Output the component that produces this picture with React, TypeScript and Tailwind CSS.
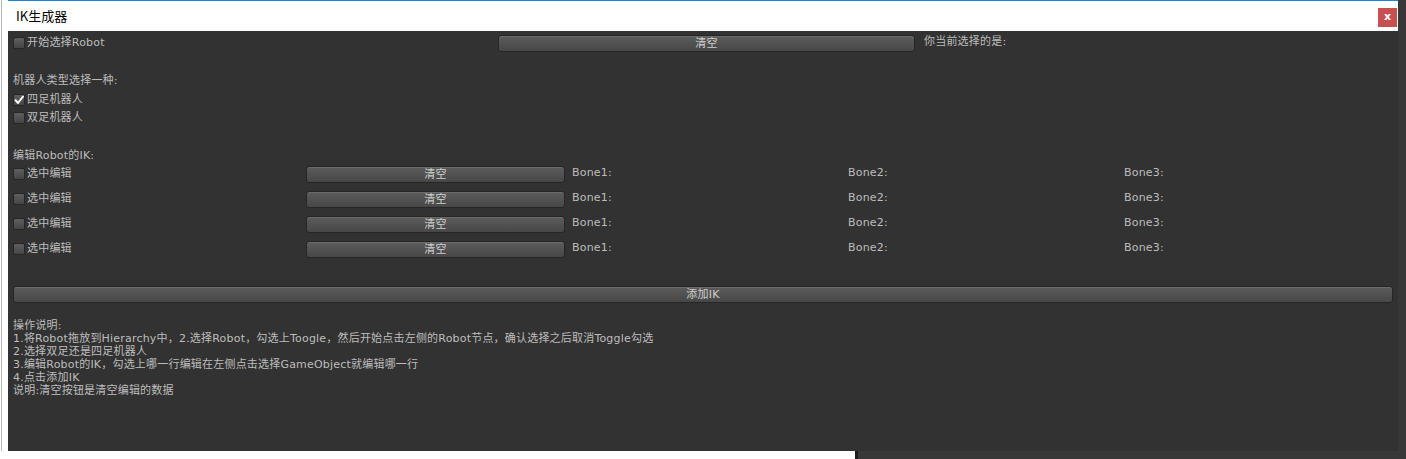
const ui = "font-['DejaVu_Sans','Noto_Sans_CJK_SC',sans-serif] text-[11px] tracking-[0.2px] text-[#bdbdbd]";

function Check({ checked = false }: { checked?: boolean }) {
  return (
    <span className="relative w-[12px] h-[12px] shrink-0 rounded-[2px] border border-[#262626] bg-gradient-to-b from-[#5e5e5e] to-[#464646]">
      {checked && (
        <svg viewBox="0 0 12 12" className="absolute -left-px -top-px w-[12px] h-[12px]">
          <path d="M2.5 6.2 L5 9 L10 2.5" fill="none" stroke="#ffffff" strokeWidth="2" strokeLinecap="round" strokeLinejoin="round" />
        </svg>
      )}
    </span>
  );
}

function Toggle({ label, checked }: { label: string; checked?: boolean }) {
  return (
    <div className="flex items-center gap-[2px]">
      <Check checked={checked} />
      <span className="leading-none pb-[1px]">{label}</span>
    </div>
  );
}

function Btn({ label, className = "" }: { label: string; className?: string }) {
  return (
    <div
      className={`h-[17px] flex items-center justify-center rounded-[3px] border border-[#262626] bg-gradient-to-b from-[#5c5c5c] to-[#474747] shadow-[inset_0_1px_0_#6a6a6a] text-[#cfcfcf] leading-none ${className}`}
    >
      {label}
    </div>
  );
}

const steps = [
  "操作说明:",
  "1.将Robot拖放到Hierarchy中，2.选择Robot，勾选上Toogle，然后开始点击左侧的Robot节点，确认选择之后取消Toggle勾选",
  "2.选择双足还是四足机器人",
  "3.编辑Robot的IK，勾选上哪一行编辑在左侧点击选择GameObject就编辑哪一行",
  "4.点击添加IK",
  "说明:清空按钮是清空编辑的数据",
];

export default function App() {
  return (
    <div className="w-[1406px] h-[459px] flex flex-col overflow-hidden bg-white">
      <div className="flex h-[451px]">
        <div className="w-[8px] bg-white flex">
          <div className="ml-[1px] w-px bg-[#b8b8b8]" />
        </div>

        <div className="w-[1390px] flex flex-col">
          <div className="h-[31px] bg-white border-t border-[#1883d7] flex justify-between">
            <span className="pl-[8px] self-center pb-[1px] text-[13px] text-black font-['Noto_Sans_CJK_SC','DejaVu_Sans',sans-serif] leading-none">
              IK生成器
            </span>
            <div className="mt-[7px] mr-[1px] w-[19px] h-[19px] bg-[#c75050] flex items-center justify-center text-white text-[11px] font-bold leading-none font-['DejaVu_Sans',sans-serif] pb-[2px]">
              x
            </div>
          </div>

          <div className={`flex-1 bg-[#323232] px-[5px] flex flex-col ${ui}`}>
            <div className="mt-[4px] h-[16px] flex items-center">
              <div className="w-[485px] pb-[1px]">
                <Toggle label="开始选择Robot" />
              </div>
              <Btn label="清空" className="w-[417px] h-[16px]" />
              <span className="ml-[9px] pb-[2px]">你当前选择的是:</span>
            </div>

            <div className="mt-[21px] h-[18px] flex items-center">机器人类型选择一种:</div>
            <div className="mt-[1px] h-[18px] flex items-center">
              <Toggle label="四足机器人" checked />
            </div>
            <div className="h-[18px] flex items-center">
              <Toggle label="双足机器人" />
            </div>

            <div className="mt-[20px] h-[18px] flex items-center">编辑Robot的IK:</div>
            <div className="mt-[1px] flex flex-col gap-[8px]">
              {[0, 1, 2, 3].map((i) => (
                <div key={i} className="h-[17px] flex items-center">
                  <div className="w-[293px] pb-[2px]">
                    <Toggle label="选中编辑" />
                  </div>
                  <Btn label="清空" className="w-[259px]" />
                  <span className="ml-[7px] w-[276px] pb-[2px]">Bone1:</span>
                  <span className="w-[276px] pb-[2px]">Bone2:</span>
                  <span className="pb-[2px]">Bone3:</span>
                </div>
              ))}
            </div>

            <Btn label="添加IK" className="mt-[28px] w-full" />

            <div className="mt-[16px] flex flex-col">
              {steps.map((s) => (
                <div key={s} className="h-[13px] leading-[13px] whitespace-nowrap">
                  {s}
                </div>
              ))}
            </div>
          </div>
        </div>

        <div className="w-[8px] bg-[#383838]" />
      </div>

      <div className="h-[8px] flex">
        <div className="w-[855px] bg-white" />
        <div className="w-[3px] bg-[#1e1e1e]" />
        <div className="flex-1 bg-[#383838]" />
      </div>
    </div>
  );
}
